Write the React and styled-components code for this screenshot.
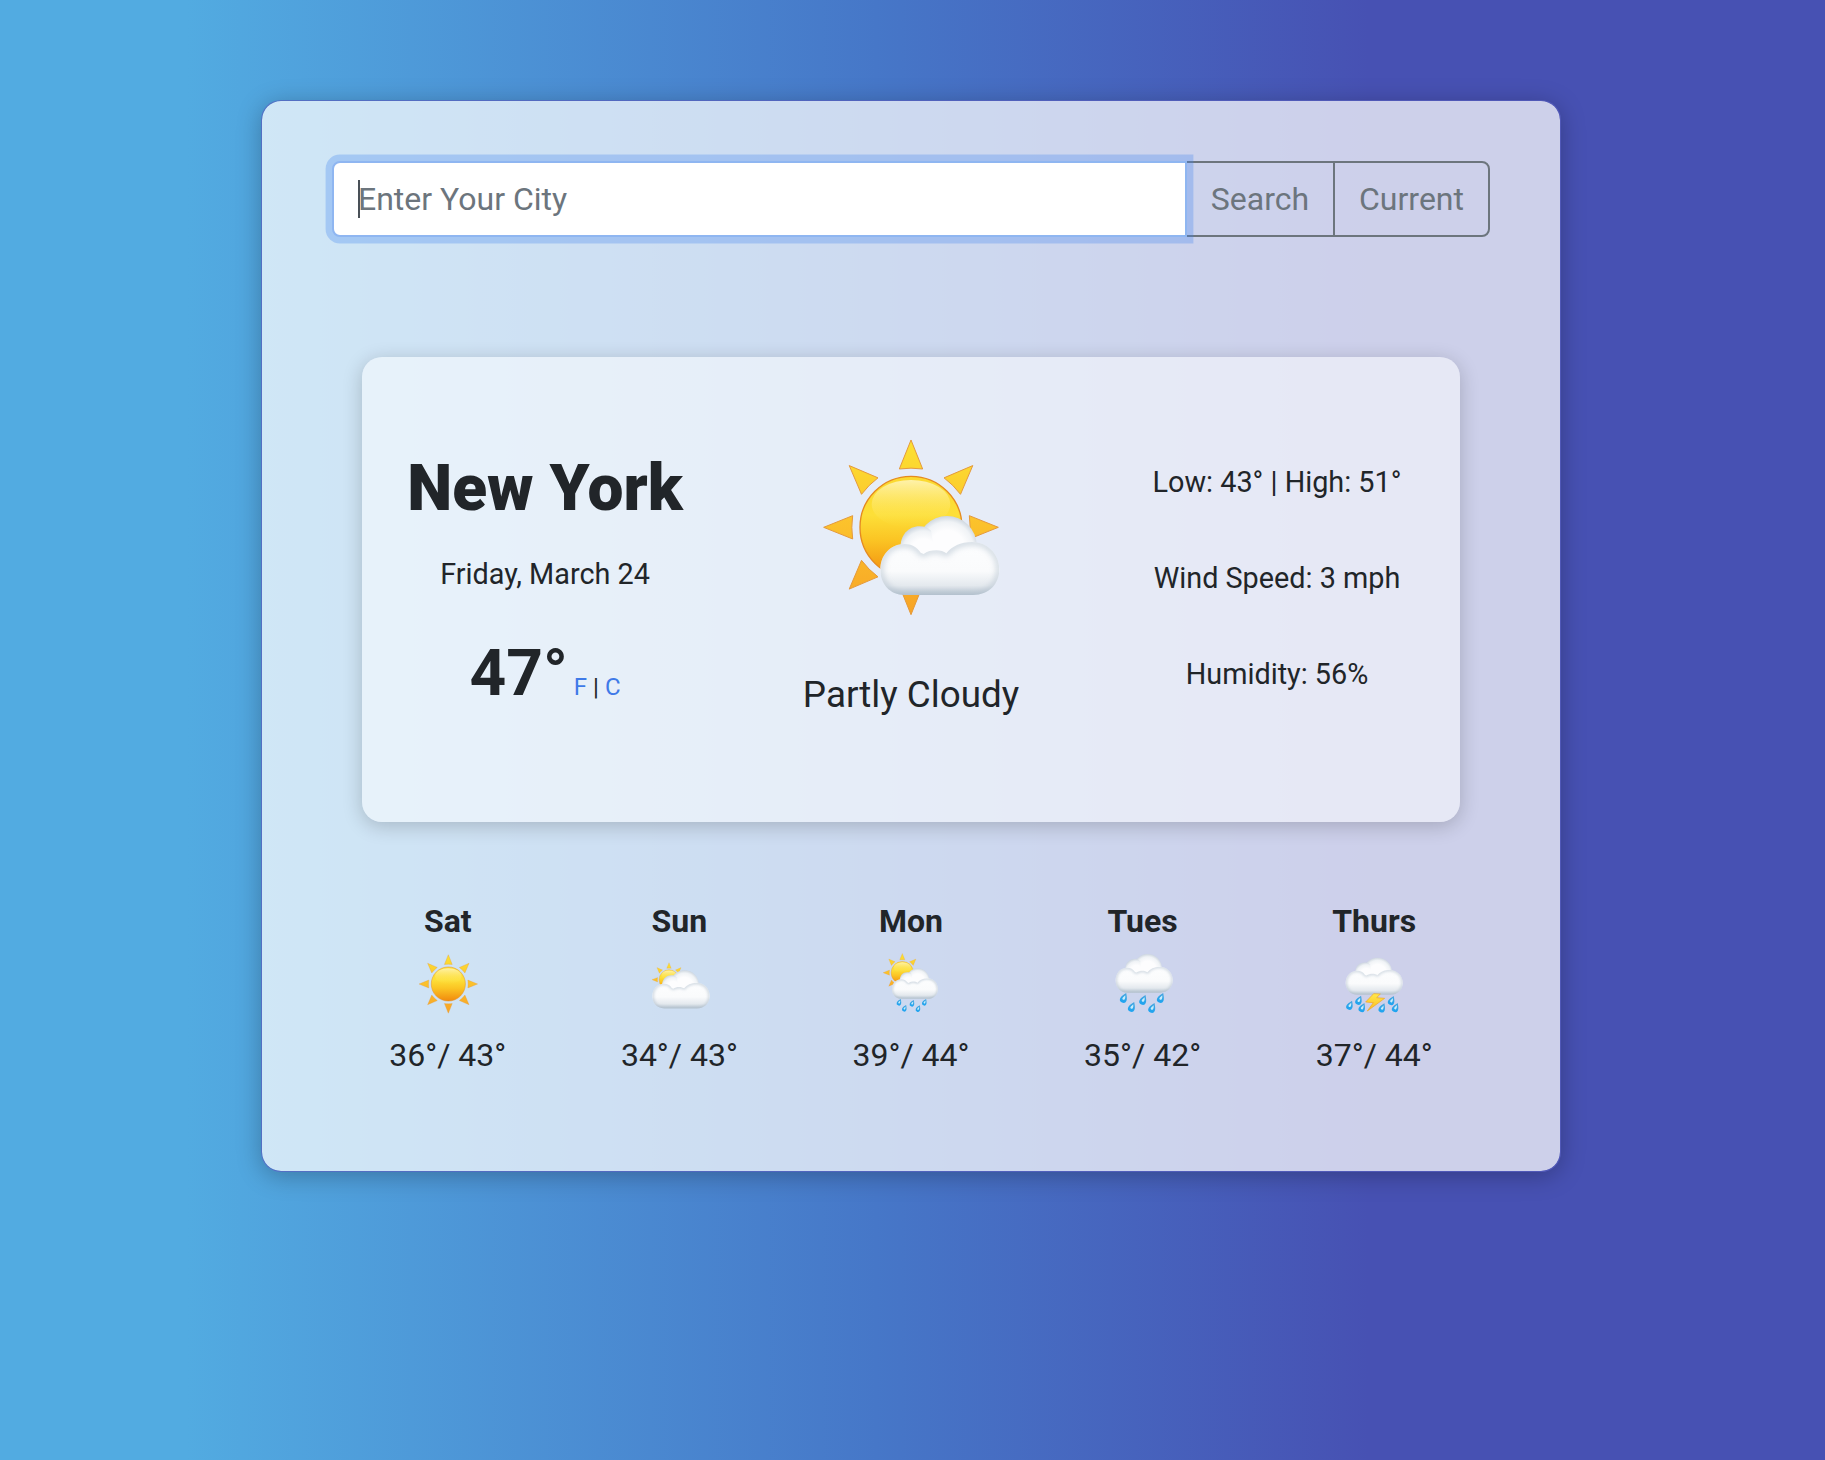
import React from "react";
import styled, { createGlobalStyle } from "styled-components";

const GlobalStyle = createGlobalStyle`
  *, *::before, *::after { box-sizing: border-box; }
  body {
    margin: 0;
    min-height: 100vh;
    font-family: Roboto, "Open Sans", sans-serif;
    font-size: 32px;
    line-height: 48px;
    color: #212529;
    background: linear-gradient(90deg, #52abe1 10.2%, #4677c8 48%, #4751b3 75%);
  }
`;

const Page = styled.main`
  display: flex;
  justify-content: center;
  width: 1822px;
  padding-top: 100px;
`;

const Card = styled.section`
  width: 1300px;
  height: 1072px;
  padding: 60px 70px 0;
  border: 1px solid rgba(84, 92, 184, 0.72);
  border-radius: 20px;
  background: rgba(255, 255, 255, 0.73);
  background-clip: padding-box;
  box-shadow: 0 4px 24px rgba(0, 0, 0, 0.26);
`;

const SearchForm = styled.form`
  display: flex;
  height: 76px;
`;

const Field = styled.div`
  position: relative;
  z-index: 1;
  flex: 1;
`;

const CityInput = styled.input`
  display: block;
  width: 100%;
  height: 76px;
  padding: 12px 24px;
  border: 2px solid #8fb6f1;
  border-radius: 8px 0 0 8px;
  outline: none;
  background: #fff;
  box-shadow: 0 0 0 6.4px rgba(66, 133, 240, 0.3);
  font: inherit;
  caret-color: transparent;
  &::placeholder { color: #6c757d; opacity: 1; }
`;

const Caret = styled.span`
  position: absolute;
  left: 26px;
  top: 19px;
  width: 2px;
  height: 38px;
  background: #495057;
`;

const SearchButton = styled.button`
  width: ${(p) => p.$width}px;
  margin-left: -2px;
  padding: 0;
  border: 2px solid #6c757d;
  border-radius: ${(p) => (p.$last ? "0 8px 8px 0" : "0")};
  background: transparent;
  color: #6c757d;
  font: inherit;
`;

const Today = styled.section`
  display: grid;
  grid-template-columns: repeat(3, 1fr);
  width: 1098px;
  height: 465px;
  margin: 120px auto 0;
  border-radius: 20px;
  background: rgba(255, 255, 255, 0.5);
  box-shadow: 0 4px 20px rgba(0, 0, 0, 0.2);
  text-align: center;
`;

const Column = styled.div`
  display: flex;
  flex-direction: column;
  align-items: center;
  padding-top: ${(p) => p.$top}px;
`;

const City = styled.h1`
  margin: 0;
  font-size: 64px;
  line-height: 77px;
  font-weight: 900;
`;

const DateLine = styled.p`
  margin: 26px 0 0;
  font-size: 28.8px;
  line-height: 43px;
`;

const Reading = styled.div`
  display: flex;
  align-items: baseline;
  margin-top: 39px;
`;

const Degrees = styled.strong`
  font-size: 64px;
  line-height: 77px;
  font-weight: 700;
`;

const Units = styled.span`
  margin-left: 6px;
  font-size: 24px;
`;

const UnitLink = styled.a`
  color: #3f7ae8;
  text-decoration: none;
`;

const Condition = styled.p`
  margin: 52px 0 0;
  font-size: 36.8px;
  line-height: 56px;
`;

const Details = styled.ul`
  display: flex;
  flex-direction: column;
  gap: 53px;
  margin: 0;
  padding: 0;
  list-style: none;
  font-size: 28.8px;
  line-height: 43px;
`;

const Forecast = styled.section`
  display: grid;
  grid-template-columns: repeat(5, 1fr);
  margin-top: 75px;
`;

const Day = styled.article`
  display: flex;
  flex-direction: column;
  align-items: center;
`;

const DayName = styled.h2`
  margin: 0;
  font-size: 32px;
  line-height: 48px;
  font-weight: 700;
`;

const Range = styled.p`
  margin: 17px 0 0;
`;

const Picture = styled.svg`
  display: block;
  width: ${(p) => p.$size}px;
  height: ${(p) => p.$size}px;
  margin-top: ${(p) => p.$gap || 0}px;
`;

const BODY =
  "M345 525C300 525 272 490 272 450C272 405 302 372 345 372C366 372 382 381 393 398L402 402C412 394 425 391 440 391C453 391 462 395 470 400C487 379 512 366 547 366C593 366 629 402 629 448C629 493 597 525 550 525Z";

function Gradients({ id }) {
  return (
    <defs>
      <linearGradient id={`${id}-disk`} x1="0" y1="0" x2="0" y2="1">
        <stop offset="0" stopColor="#fbd92f" />
        <stop offset="0.38" stopColor="#fddf38" />
        <stop offset="0.62" stopColor="#fbc524" />
        <stop offset="1" stopColor="#f18a0d" />
      </linearGradient>
      <linearGradient id={`${id}-gloss`} x1="0" y1="0" x2="0" y2="1">
        <stop offset="0" stopColor="#fff6c0" stopOpacity="0.85" />
        <stop offset="1" stopColor="#ffe44a" stopOpacity="0" />
      </linearGradient>
      <linearGradient id={`${id}-ray`} gradientUnits="userSpaceOnUse" x1="0" y1="-262" x2="0" y2="262">
        <stop offset="0" stopColor="#fce232" />
        <stop offset="0.4" stopColor="#fcc62c" />
        <stop offset="1" stopColor="#f7a326" />
      </linearGradient>
      <radialGradient id={`${id}-puff`} cx="0.5" cy="0.54" r="0.54">
        <stop offset="0.55" stopColor="#fdfdfe" />
        <stop offset="0.82" stopColor="#f0f3f6" />
        <stop offset="1" stopColor="#cdd6df" />
      </radialGradient>
      <radialGradient id={`${id}-small-puff`} gradientUnits="userSpaceOnUse" cx="402" cy="397" r="80">
        <stop offset="0.5" stopColor="#fdfdfe" />
        <stop offset="0.8" stopColor="#f0f3f6" />
        <stop offset="1" stopColor="#cdd6df" />
      </radialGradient>
      <linearGradient id={`${id}-body`} gradientUnits="userSpaceOnUse" x1="0" y1="366" x2="0" y2="525">
        <stop offset="0.1" stopColor="#fcfdfe" />
        <stop offset="0.55" stopColor="#fafbfc" />
        <stop offset="0.82" stopColor="#e4e9ee" />
        <stop offset="1" stopColor="#b9c6d1" />
      </linearGradient>
      <linearGradient id={`${id}-drop`} x1="0" y1="0" x2="0" y2="1">
        <stop offset="0" stopColor="#4aa5dc" />
        <stop offset="1" stopColor="#1ba4f2" />
      </linearGradient>
      <linearGradient id={`${id}-bolt`} x1="0" y1="0" x2="0" y2="1">
        <stop offset="0" stopColor="#ffe94a" />
        <stop offset="1" stopColor="#fbbb20" />
      </linearGradient>
      <clipPath id={`${id}-clip`}>
        <path d={BODY} />
      </clipPath>
      <filter id={`${id}-soft`} x="-20%" y="-20%" width="140%" height="140%">
        <feGaussianBlur stdDeviation="9" />
      </filter>
    </defs>
  );
}

const rayPoint = (x, y, a) => {
  const c = Math.cos(a);
  const s = Math.sin(a);
  return `${(x * c - y * s).toFixed(1)} ${(x * s + y * c).toFixed(1)}`;
};
const RAYS = Array.from({ length: 8 }, (_, i) => {
  const a = (i * Math.PI) / 4;
  return `M${rayPoint(0, -262, a)}L${rayPoint(35, -175, a)}Q${rayPoint(0, -180, a)} ${rayPoint(-35, -175, a)}Z`;
}).join("");

function Sun({ id, x, y, scale = 1 }) {
  return (
    <g transform={`translate(${x} ${y}) scale(${scale})`}>
      <path d={RAYS} fill={`url(#${id}-ray)`} stroke="#e59a3c" strokeWidth="3" strokeLinejoin="round" />
      <circle r="153" fill={`url(#${id}-disk)`} stroke="#e58a1f" strokeWidth="4" />
      <ellipse cy="-70" rx="118" ry="72" fill={`url(#${id}-gloss)`} />
    </g>
  );
}

function Cloud({ id, x, y, scale = 1, stretch = 1 }) {
  return (
    <g transform={`translate(${x} ${y}) scale(${scale} ${scale * stretch}) translate(-272 -288)`}>
      <circle cx="472" cy="377" r="89" fill={`url(#${id}-puff)`} />
      <path
        d="M332 385C332 345 356 319 389 319C405 319 415 323 424 332L440 420H340Z"
        fill={`url(#${id}-small-puff)`}
      />
      <path d={BODY} fill={`url(#${id}-body)`} />
      <g clipPath={`url(#${id}-clip)`}>
        <path
          d={BODY}
          fill="none"
          stroke="#a9b9c7"
          strokeOpacity="0.72"
          strokeWidth="13"
          filter={`url(#${id}-soft)`}
        />
      </g>
    </g>
  );
}

function Drops({ id, points, size }) {
  return points.map(([x, y]) => (
    <g key={`${x}-${y}`} transform={`translate(${x} ${y}) scale(${size}) rotate(24)`}>
      <path d="M0-16C5-8 10-2 10 5A10 9.5 0 0 1-10 5C-10-2-5-8 0-16Z" fill={`url(#${id}-drop)`} />
      <path d="M0-9C3-4 4-1 3 4C1 7-3 5-4 3C-4-1-1-5 0-9Z" fill="#c9edfb" />
    </g>
  ));
}

function WeatherIcon({ kind, size = 60, gap }) {
  const id = `wx-${kind}`;
  const boxes = {
    partly: "100 58 528 528",
    sunny: "234 222 180 180",
    mostly: "929 222 180 180",
    showers: "183 222 180 180",
    rain: "878 222 180 180",
    storm: "313 222 180 180",
  };
  return (
    <Picture viewBox={boxes[kind]} $size={size} $gap={gap} overflow="visible" aria-hidden="true">
      <Gradients id={id} />
      {kind === "partly" && (
        <>
          <Sun id={id} x={364} y={323} />
          <Cloud id={id} x={272} y={289} />
        </>
      )}
      {kind === "sunny" && <Sun id={id} x={325} y={312} scale={0.335} />}
      {kind === "mostly" && (
        <>
          <Sun id={id} x={989} y={299} scale={0.195} />
          <Cloud id={id} x={939} y={271} scale={0.482} />
        </>
      )}
      {kind === "showers" && (
        <>
          <Sun id={id} x={247} y={278} scale={0.22} />
          <Cloud id={id} x={216} y={265} scale={0.386} />
          <Drops id={id} size={0.68} points={[[238, 367], [254, 385], [277, 370], [295, 386], [314, 367]]} />
        </>
      )}
      {kind === "rain" && (
        <>
          <Cloud id={id} x={886} y={222} scale={0.48} stretch={1.02} />
          <Drops id={id} size={1.02} points={[[911, 354], [935, 381], [969, 360], [996, 384], [1022, 354]]} />
        </>
      )}
      {kind === "storm" && (
        <>
          <Cloud id={id} x={318} y={233} scale={0.48} stretch={0.98} />
          <Drops id={id} size={0.95} points={[[331, 376], [358, 361], [368, 383], [428, 384], [456, 362], [468, 383]]} />
          <path
            d="M402 341L378 366L401 368L383 393L435 355L411 353L422 342Z"
            fill={`url(#${id}-bolt)`}
            stroke="#f3a51c"
            strokeWidth="2"
            strokeLinejoin="round"
          />
        </>
      )}
    </Picture>
  );
}

const week = [
  { day: "Sat", kind: "sunny", range: "36°/ 43°" },
  { day: "Sun", kind: "mostly", range: "34°/ 43°" },
  { day: "Mon", kind: "showers", range: "39°/ 44°" },
  { day: "Tues", kind: "rain", range: "35°/ 42°" },
  { day: "Thurs", kind: "storm", range: "37°/ 44°" },
];

export default function App() {
  return (
    <>
      <GlobalStyle />
      <Page>
        <Card>
          <SearchForm onSubmit={(e) => e.preventDefault()}>
            <Field>
              <CityInput type="text" placeholder="Enter Your City" />
              <Caret />
            </Field>
            <SearchButton type="submit" $width={150}>Search</SearchButton>
            <SearchButton type="button" $width={157} $last>Current</SearchButton>
          </SearchForm>
          <Today>
            <Column $top={93}>
              <City>New York</City>
              <DateLine>Friday, March 24</DateLine>
              <Reading>
                <Degrees>47°</Degrees>
                <Units>
                  <UnitLink href="#f">F</UnitLink> | <UnitLink href="#c">C</UnitLink>
                </Units>
              </Reading>
            </Column>
            <Column $top={82}>
              <WeatherIcon kind="partly" size={176} />
              <Condition>Partly Cloudy</Condition>
            </Column>
            <Column $top={104}>
              <Details>
                <li>Low: 43° | High: 51°</li>
                <li>Wind Speed: 3 mph</li>
                <li>Humidity: 56%</li>
              </Details>
            </Column>
          </Today>
          <Forecast>
            {week.map((d) => (
              <Day key={d.day}>
                <DayName>{d.day}</DayName>
                <WeatherIcon kind={d.kind} gap={9} />
                <Range>{d.range}</Range>
              </Day>
            ))}
          </Forecast>
        </Card>
      </Page>
    </>
  );
}
